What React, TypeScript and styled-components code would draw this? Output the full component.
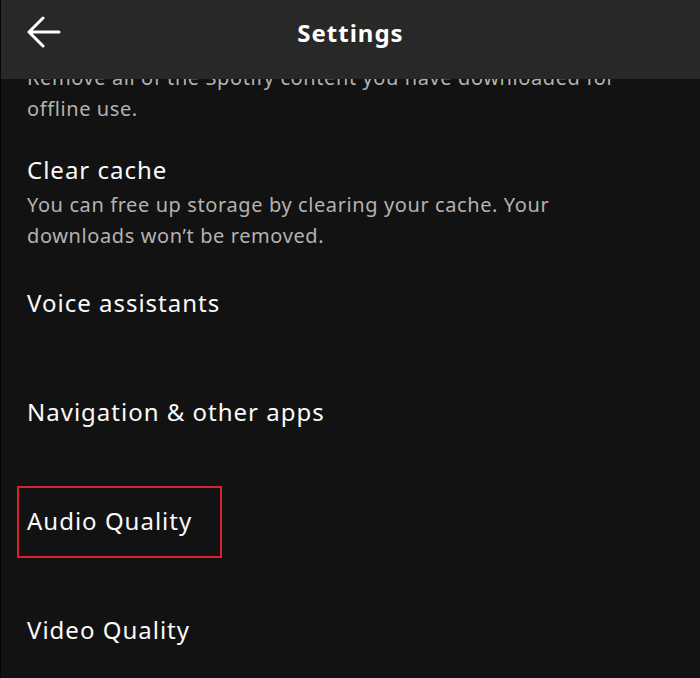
import React from "react";
import styled, { createGlobalStyle } from "styled-components";

const GlobalStyle = createGlobalStyle`
    html, body {
        margin: 0;
        padding: 0;
        background: #121212;
    }
    body {
        font-family: "Noto Sans", "Liberation Sans", sans-serif;
        -webkit-font-smoothing: antialiased;
    }
`;

type Setting = {
    title: string;
    description?: string;
    highlighted?: boolean;
};

const SETTINGS: Setting[] = [
    {
        title: "Remove all downloads",
        description:
            "Remove all of the Spotify content you have downloaded for offline use.",
    },
    {
        title: "Clear cache",
        description:
            "You can free up storage by clearing your cache. Your downloads won\u2019t be removed.",
    },
    { title: "Voice assistants" },
    { title: "Navigation & other apps" },
    { title: "Audio Quality", highlighted: true },
    { title: "Video Quality" },
];

const BackArrow = () => (
    <svg width="36" height="34" viewBox="0 0 36 34" fill="none">
        <path
            d="M33 16H3M17 2L3 16L17 30"
            stroke="#fff"
            strokeWidth="3"
            strokeLinecap="round"
            strokeLinejoin="round"
        />
    </svg>
);

export default function App() {
    return (
        <>
            <GlobalStyle />
            <Screen>
                <Header>
                    <BackButton aria-label="Back">
                        <BackArrow />
                    </BackButton>
                    <HeaderTitle>Settings</HeaderTitle>
                </Header>
                <List>
                    {SETTINGS.map((s) =>
                        s.description ? (
                            <DescribedItem key={s.title}>
                                <ItemTitle>{s.title}</ItemTitle>
                                <ItemDescription>{s.description}</ItemDescription>
                            </DescribedItem>
                        ) : (
                            <SimpleItem key={s.title}>
                                <ItemTitle highlighted={s.highlighted}>{s.title}</ItemTitle>
                            </SimpleItem>
                        )
                    )}
                </List>
            </Screen>
        </>
    );
}

const Screen = styled.div`
    position: relative;
    width: 700px;
    height: 678px;
    overflow: hidden;
    background: #121212;
    border-left: 1px solid #050505;
    box-sizing: border-box;
`;

const Header = styled.header`
    position: absolute;
    top: 0;
    left: 0;
    right: 0;
    height: 79px;
    background: #282828;
    display: flex;
    align-items: center;
    justify-content: center;
    z-index: 2;
`;

const BackButton = styled.button`
    position: absolute;
    left: 25px;
    top: 16px;
    padding: 0;
    border: none;
    background: none;
    display: flex;
`;

const HeaderTitle = styled.h1`
    margin: 0;
    margin-top: -15px;
    color: #fff;
    font-size: 24px;
    font-weight: 700;
    letter-spacing: 1px;
`;

const List = styled.div`
    display: flex;
    flex-direction: column;
    padding: 27px 0 0 26px;
`;

const DescribedItem = styled.div`
    display: flex;
    flex-direction: column;
    gap: 3px;
    margin-bottom: 30px;
`;

const SimpleItem = styled.div`
    height: 109px;
    padding-top: 6px;
    box-sizing: border-box;
`;

const ItemTitle = styled.div<{ highlighted?: boolean }>`
    position: relative;
    display: inline-block;
    align-self: flex-start;
    color: #fafafa;
    font-size: 24px;
    line-height: 32px;
    font-weight: 400;
    letter-spacing: 1px;

    &::after {
        content: "";
        display: ${(p) => (p.highlighted ? "block" : "none")};
        position: absolute;
        top: -19px;
        left: -10px;
        width: 205px;
        height: 72px;
        border: 2px solid #d8232e;
        box-sizing: border-box;
    }
`;

const ItemDescription = styled.div`
    color: #b3b3b3;
    font-size: 20px;
    line-height: 31px;
    letter-spacing: 0.6px;
    max-width: 615px;
`;
